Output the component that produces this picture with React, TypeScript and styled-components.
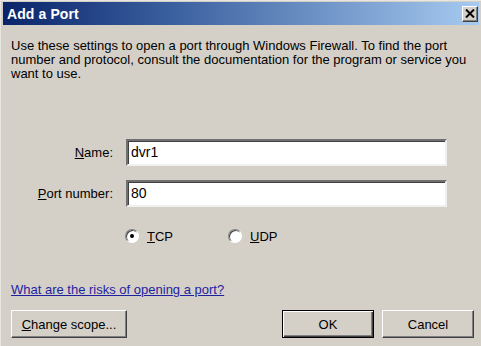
import React from "react";
import styled, { createGlobalStyle } from "styled-components";

const Global = createGlobalStyle`
  html, body { margin: 0; padding: 0; background: #d4d0c8; }
  body { font-family: "Liberation Sans", Arial, sans-serif; }
`;

const Window = styled.div`
  width: 481px;
  height: 346px;
  box-sizing: border-box;
  background: #d4d0c8;
  border-top: 1px solid #e8e6e0;
  border-left: 1px solid #e8e6e0;
  padding: 1px 2px 0 2px;
  display: flex;
  flex-direction: column;
  font-size: 13px;
  color: #000;
`;

const TitleBar = styled.div`
  height: 23px;
  background: linear-gradient(to right, #0a246a 0%, #3a5f9e 35%, #a6caf0 100%);
  display: flex;
  align-items: center;
  justify-content: space-between;
  padding: 0 1px 0 4px;
`;

const Title = styled.span`
  color: #fff;
  font-weight: bold;
  font-size: 14px;
  letter-spacing: 0.1px;
`;

const CloseButton = styled.div`
  width: 16px;
  height: 16px;
  box-sizing: border-box;
  background: #d4d0c8;
  border: 1px solid;
  border-color: #fff #404040 #404040 #fff;
  box-shadow: inset -1px -1px #808080;
  display: flex;
  align-items: center;
  justify-content: center;
`;

const Content = styled.div`
  flex: 1;
  display: flex;
  flex-direction: column;
  padding: 0 4px 0 8px;
`;

const Description = styled.p`
  margin: 14px 0 0 0;
  line-height: 14px;
  font-size: 13px;
  width: 460px;
`;

const FormGrid = styled.div`
  display: grid;
  grid-template-columns: 102px 321px;
  column-gap: 13px;
  row-gap: 14px;
  align-items: center;
  margin-top: 58px;
`;

const Label = styled.label`
  text-align: right;
`;

const Key = styled.span`
  text-decoration: underline;
`;

const TextInput = styled.input`
  box-sizing: border-box;
  height: 27px;
  width: 321px;
  border: 2px solid;
  border-color: #707070 #f0f0f0 #f0f0f0 #707070;
  box-shadow: inset 1px 1px #404040;
  background: #fff;
  font-family: "Liberation Sans", Arial, sans-serif;
  font-size: 14px;
  padding: 0 2px 2px 3px;
  outline: none;
  color: #000;
`;

const RadioRow = styled.div`
  display: flex;
  align-items: center;
  margin-top: 21px;
  padding-left: 114px;
  height: 16px;
`;

const RadioOption = styled.div<{ $width: number }>`
  display: flex;
  align-items: center;
  gap: 8px;
  width: ${(p) => p.$width}px;
`;

const RadioCircle = styled.span<{ $checked: boolean }>`
  box-sizing: border-box;
  width: 14px;
  height: 14px;
  border-radius: 50%;
  border: 1px solid;
  border-color: #808080 #ffffff #ffffff #808080;
  background: #fff;
  box-shadow: inset 1px 1px #404040;
  display: flex;
  align-items: center;
  justify-content: center;
  &::after {
    content: "";
    width: 4px;
    height: 4px;
    border-radius: 50%;
    background: ${(p) => (p.$checked ? "#000" : "transparent")};
  }
`;

const Link = styled.a`
  margin-top: 38px;
  color: #1f1fa0;
  text-decoration: underline;
  font-size: 13px;
  cursor: pointer;
  align-self: flex-start;
`;

const ButtonRow = styled.div`
  display: flex;
  align-items: center;
  gap: 8px;
  margin-top: 13px;
  padding-right: 1px;
`;

const Spacer = styled.div`
  flex: 1;
`;

const Button = styled.button<{ $width: number; $default?: boolean }>`
  box-sizing: border-box;
  width: ${(p) => p.$width}px;
  height: 28px;
  background: #d4d0c8;
  font-family: "Liberation Sans", Arial, sans-serif;
  font-size: 13px;
  color: #000;
  padding: 0;
  border: 1px solid;
  border-color: ${(p) =>
    p.$default ? "#000" : "#ffffff #404040 #404040 #ffffff"};
  box-shadow: ${(p) =>
    p.$default
      ? "inset 1px 1px #fff, inset -1px -1px #404040, inset -2px -2px #808080"
      : "inset -1px -1px #808080"};
`;

export default function App() {
  return (
    <>
      <Global />
      <Window>
        <TitleBar>
          <Title>Add a Port</Title>
          <CloseButton>
            <svg width="10" height="9" viewBox="0 0 10 9">
              <path d="M1 0.5 L9 8.5 M9 0.5 L1 8.5" stroke="#000" strokeWidth="2" />
            </svg>
          </CloseButton>
        </TitleBar>
        <Content>
          <Description>
            Use these settings to open a port through Windows Firewall. To find the port
            number and protocol, consult the documentation for the program or service you
            want to use.
          </Description>
          <FormGrid>
            <Label>
              <Key>N</Key>ame:
            </Label>
            <TextInput defaultValue="dvr1" />
            <Label>
              <Key>P</Key>ort number:
            </Label>
            <TextInput defaultValue="80" />
          </FormGrid>
          <RadioRow>
            <RadioOption $width={103}>
              <RadioCircle $checked={true} />
              <span>
                <Key>T</Key>CP
              </span>
            </RadioOption>
            <RadioOption $width={80}>
              <RadioCircle $checked={false} />
              <span>
                <Key>U</Key>DP
              </span>
            </RadioOption>
          </RadioRow>
          <Link>What are the risks of opening a port?</Link>
          <ButtonRow>
            <Button $width={116}>
              <Key>C</Key>hange scope...
            </Button>
            <Spacer />
            <Button $width={92} $default>
              OK
            </Button>
            <Button $width={92}>Cancel</Button>
          </ButtonRow>
        </Content>
      </Window>
    </>
  );
}
